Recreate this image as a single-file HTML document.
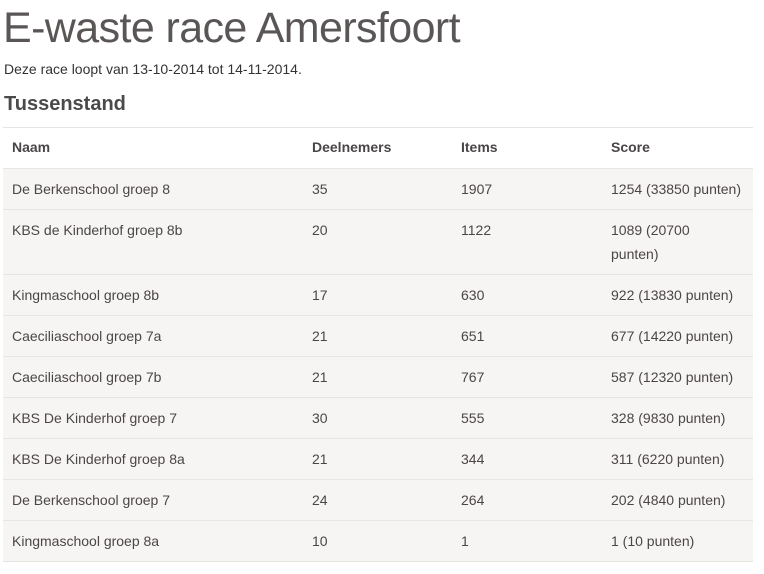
<!DOCTYPE html>
<html><head><meta charset="utf-8"><style>
body{margin:0;background:#fff;color:#4a4646;font-family:"Liberation Sans",sans-serif;width:764px;height:574px;overflow:hidden;position:relative}
h1{position:absolute;left:3px;top:1px;margin:0;font-weight:300;font-size:43px;line-height:54px;color:#5a5656;letter-spacing:-0.6px}
.sub{position:absolute;left:4px;top:61px;font-size:14px;color:#333}
h2{position:absolute;left:4px;top:93px;margin:0;font-size:20px;font-weight:bold;color:#4a4a4a}
.t{position:absolute;left:3px;top:127px;width:750px;border-top:1px solid #e6e3e0}
.r{position:relative;height:40px;border-bottom:1px solid #e8e4e0;background:#f7f5f3;font-size:14px}
.r.h{background:#fff;height:40px;font-weight:bold;border-bottom:1px solid #e8e4e0}
.r.tall{height:64px}
.r span{position:absolute;top:8px;line-height:24px}
.r.h span{top:7px}
.a{left:9px}.b{left:309px}.c{left:458px}.d{left:608px}
</style></head><body>
<h1>E-waste race Amersfoort</h1>
<div class="sub">Deze race loopt van 13-10-2014 tot 14-11-2014.</div>
<h2>Tussenstand</h2>
<div class="t">
<div class="r h"><span class="a">Naam</span><span class="b">Deelnemers</span><span class="c">Items</span><span class="d">Score</span></div>
<div class="r"><span class="a">De Berkenschool groep 8</span><span class="b">35</span><span class="c">1907</span><span class="d">1254 (33850 punten)</span></div>
<div class="r tall"><span class="a">KBS de Kinderhof groep 8b</span><span class="b">20</span><span class="c">1122</span><span class="d">1089 (20700<br>punten)</span></div>
<div class="r"><span class="a">Kingmaschool groep 8b</span><span class="b">17</span><span class="c">630</span><span class="d">922 (13830 punten)</span></div>
<div class="r"><span class="a">Caeciliaschool groep 7a</span><span class="b">21</span><span class="c">651</span><span class="d">677 (14220 punten)</span></div>
<div class="r"><span class="a">Caeciliaschool groep 7b</span><span class="b">21</span><span class="c">767</span><span class="d">587 (12320 punten)</span></div>
<div class="r"><span class="a">KBS De Kinderhof groep 7</span><span class="b">30</span><span class="c">555</span><span class="d">328 (9830 punten)</span></div>
<div class="r"><span class="a">KBS De Kinderhof groep 8a</span><span class="b">21</span><span class="c">344</span><span class="d">311 (6220 punten)</span></div>
<div class="r"><span class="a">De Berkenschool groep 7</span><span class="b">24</span><span class="c">264</span><span class="d">202 (4840 punten)</span></div>
<div class="r"><span class="a">Kingmaschool groep 8a</span><span class="b">10</span><span class="c">1</span><span class="d">1 (10 punten)</span></div>
</div>
</body></html>
